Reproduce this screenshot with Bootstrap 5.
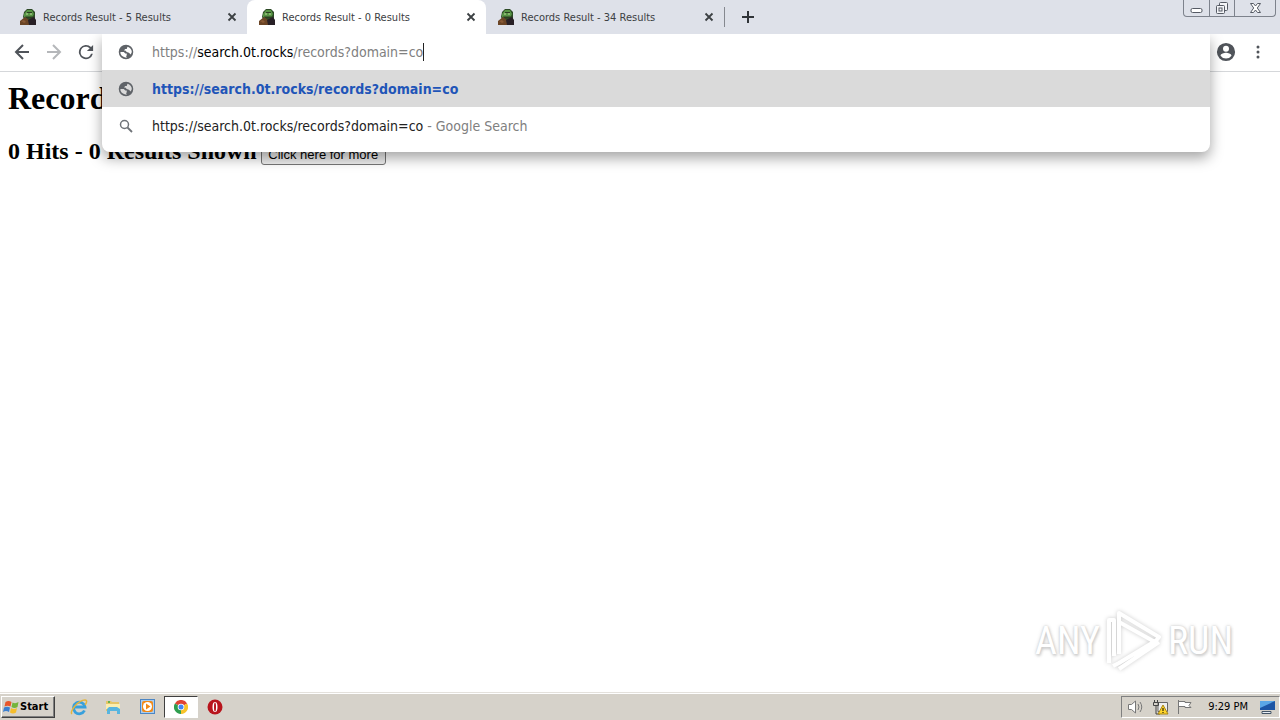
<!DOCTYPE html>
<html lang="en">
<head>
<meta charset="utf-8">
<meta name="viewport" content="width=device-width, initial-scale=1">
<title>Records Result - 0 Results</title>
<link href="https://cdn.jsdelivr.net/npm/bootstrap@5.3.0/dist/css/bootstrap.min.css" rel="stylesheet">
<style>
body { font-family: "DejaVu Sans Condensed", "Noto Sans", sans-serif; background: #fff; color: #000; font-size: 11px; line-height: 16px; }
svg { display: block; flex: none; }
button { font-family: inherit; }
.plain { border: 0; background: none; padding: 0; color: inherit; }
.tabstrip { height: 34px; background: #dee1e9; color: #3c4043; padding-left: 8px; }
.tab { width: 239px; height: 34px; padding: 0 10px 0 12px; }
.tab a { color: #3c4043; font-size: 11px; margin-left: 7px; padding-top: 1px; }
.tab.current { background: #fff; border-radius: 8px 8px 0 0; }
.tab.last { height: 20px; border-right: 1px solid #85888f; }
.newtab { width: 46px; height: 34px; }
.winbtns { height: 17px; border: 1px solid #7d828c; border-top: 0; border-radius: 0 0 4px 4px; margin-right: 4px; }
.winbtns button { width: 25px; height: 16px; }
.winbtns button + button { border-left: 1px solid #7d828c; }
.winbtns button:last-child { width: 41px; }
.toolbar { height: 38px; border-bottom: 1px solid #d5d7da; background: #fff; }
.navbtns { width: 102px; height: 36px; padding-left: 14px; gap: 16px; }
.omni { height: 37px; z-index: 5; }
.popup { top: 0; left: 0; right: 0; height: 118px; background: #fff; border-radius: 0 0 8px 8px; box-shadow: 0 6px 14px rgba(0,0,0,.36); clip-path: inset(0 -20px -30px -20px); font-size: 14px; line-height: 20px; }
.line { height: 37px; padding-left: 16px; gap: 18px; }
.line.entry { height: 36px; }
.line.hot { background: #dadada; }
.line a { color: #222; }
.line.hot a { color: #1f55b8; font-weight: 700; }
.urlbox { position: relative; }
.urlbox input { border: 0; padding: 0; width: 100%; color: transparent; background: none; outline: 0; position: absolute; inset: 0; }
.caret { width: 1px; height: 18px; background: #222; }
.grey { color: #808080; }
.user { padding: 0 13px 0 6px; gap: 14px; width: 70px; height: 36px; }
.page { font-family: "Liberation Serif", serif; padding: 8px; }
.page h1 { font-size: 32px; line-height: 37px; font-weight: 700; margin: 0 0 20px; }
.page h2 { font-size: 24px; line-height: 28px; font-weight: 700; margin: 0; }
.more { font-family: "Liberation Sans", sans-serif; font-size: 13px; line-height: 15px; height: 21px; width: 125px; padding: 0; border: 1px solid #767676; border-radius: 3px; background: #efefef; color: #000; margin-top: 7px; }
.wm { right: 47px; bottom: 20px; gap: 5px; color: #fff; font-family: "Roboto Condensed", Roboto, sans-serif; font-weight: 400; font-size: 38px; line-height: 60px; text-shadow: 0 0 2px #ccc, 1px 2px 3px #ccc, 0 0 4px #ddd; }
.wm svg { filter: drop-shadow(0 0 2px #ccc); }
.taskbar { height: 28px; background: #d6d2ca; border-top: 1px solid #e4e1dc; box-shadow: inset 0 1px #fff; padding-left: 1px; color: #000; }
.raised { width: 54px; height: 22px; border: 1px solid; border-color: #fff #404040 #404040 #fff; box-shadow: inset -1px -1px #808080; font-weight: 700; font-size: 11px; }
.quick { margin-left: 7px; }
.quick button { width: 34px; height: 22px; }
.quick button.pressed { background: #fff; border: 1px solid; border-color: #404040 #fff #fff #404040; }
.tray { height: 22px; border: 1px solid; border-color: #808080 #fff #fff #808080; padding: 0 3px 0 5px; gap: 7px; }
.clock { margin: 0 4px 0 8px; }
</style>
</head>
<body class="d-flex flex-column vh-100 overflow-hidden">
<svg width="0" height="0" class="position-absolute" aria-hidden="true">
  <symbol id="frog" viewBox="0 0 16 16"><path fill="#2d4a26" d="M3 8 4 3 7 0h5l3 3v11H6z"/><path fill="#569444" d="M4 5 7 1l5 0 2 4-2 4H7L4 8z"/><path fill="#2c3f22" d="M5 7.500h8V9H6zM7 3h5v1H7z"/><path fill="#b9d69b" d="M6 4.500h2v1H6zM10 4.500h2v1h-2z"/><path fill="#6b4526" d="m0 12 5-4 4 3 2 3v2H0z"/><path fill="#282026" d="M8 11l6-3 2 3v5H9z"/><path fill="#8a5a35" d="m1 12 3-1 2 2-2 1z"/></symbol>
  <symbol id="cross" viewBox="0 0 10 10"><path d="m1.500 1.500 7 7m0-7-7 7" stroke="#3c4043" stroke-width="1.800"/></symbol>
  <symbol id="globe" viewBox="1 1 22 22"><path fill="#5f6368" d="M12 2a10 10 0 1 0 0 20 10 10 0 0 0 0-20zm1 17.800c-3.500.2-7-1.800-8.500-5.300L4.300 12H9l2 2h2v3h-1zM18.500 15.500 16 13l-3-1-2-2H9l2-2h2l1-3.300c3.500.8 6 4 6 7.300z"/></symbol>
</svg>

<header>
  <div class="tabstrip d-flex align-items-center">
    <div class="tab d-flex align-items-center"><svg width="16" height="16"><use href="#frog"/></svg><a href="#" class="text-decoration-none flex-grow-1">Records Result - 5 Results</a><button class="plain" aria-label="Close tab"><svg width="10" height="10"><use href="#cross"/></svg></button></div>
    <div class="tab current d-flex align-items-center"><svg width="16" height="16"><use href="#frog"/></svg><a href="#" class="text-decoration-none flex-grow-1">Records Result - 0 Results</a><button class="plain" aria-label="Close tab"><svg width="10" height="10"><use href="#cross"/></svg></button></div>
    <div class="tab last d-flex align-items-center"><svg width="16" height="16"><use href="#frog"/></svg><a href="#" class="text-decoration-none flex-grow-1">Records Result - 34 Results</a><button class="plain" aria-label="Close tab"><svg width="10" height="10"><use href="#cross"/></svg></button></div>
    <button class="plain newtab d-flex align-items-center justify-content-center" aria-label="New tab"><svg width="12" height="12"><path d="M6 0v12M0 6h12" stroke="#303438" stroke-width="2"/></svg></button>
    <div class="winbtns d-flex ms-auto align-self-start">
      <button class="plain d-flex align-items-center justify-content-center" aria-label="Minimize"><svg width="13" height="10"><rect x="1" y="5.500" width="11" height="4" rx="1.500" fill="#fff" stroke="#555a64"/></svg></button>
      <button class="plain d-flex align-items-center justify-content-center" aria-label="Restore"><svg width="14" height="14" fill="#f4f5f8" stroke="#555a64"><rect x="4.500" y="1.500" width="8" height="8" rx="1"/><rect x="1.500" y="4.500" width="8" height="8" rx="1"/><rect x="4" y="7" width="3" height="3"/></svg></button>
      <button class="plain d-flex align-items-center justify-content-center" aria-label="Close"><svg width="13" height="12"><path d="M1.500 1.500h3l2 2.500 2-2.500h3L8.300 6l3.200 4.500h-3L6.500 8l-2 2.500h-3L4.700 6z" fill="#fff" stroke="#555a64"/></svg></button>
    </div>
  </div>
  <div class="toolbar d-flex align-items-start">
    <div class="navbtns d-flex align-items-center">
      <button class="plain" aria-label="Back"><svg width="16" height="16" fill="none" stroke="#50545a" stroke-width="2"><path d="M15 8H2m7-7L2 8l7 7"/></svg></button>
      <button class="plain" aria-label="Forward"><svg width="16" height="16" fill="none" stroke="#b5b7ba" stroke-width="2"><path d="M1 8h13M7 1l7 7-7 7"/></svg></button>
      <button class="plain" aria-label="Reload"><svg width="16" height="16" viewBox="3 3 18 18"><path fill="#50545a" d="M17.650 6.350A8 8 0 1 0 19.730 14h-2.080A6 6 0 1 1 12 6c1.660 0 3.140.690 4.220 1.780L13 11h7V4z"/></svg></button>
    </div>
    <div class="omni position-relative flex-grow-1">
      <div class="popup position-absolute">
        <div class="line entry d-flex align-items-center"><svg width="16" height="16"><use href="#globe"/></svg><label class="urlbox d-flex align-items-center"><span class="grey">https://</span>search.0t.rocks<span class="grey">/records?domain=co</span><span class="caret"></span><input type="text" aria-label="Address"></label></div>
        <div class="line hot d-flex align-items-center"><svg width="16" height="16"><use href="#globe"/></svg><a href="#" class="text-decoration-none">https://search.0t.rocks/records?domain=co</a></div>
        <div class="line d-flex align-items-center"><svg width="16" height="16" fill="none" stroke="#6f7378"><circle cx="6.500" cy="6.500" r="4" stroke-width="1.500"/><path d="m9.500 9.500 4.500 4.500" stroke-width="1.800"/></svg><a href="#" class="text-decoration-none">https://search.0t.rocks/records?domain=co <span class="grey">- Google Search</span></a></div>
      </div>
    </div>
    <div class="user d-flex align-items-center">
      <button class="plain" aria-label="Profile"><svg width="20" height="20" viewBox="1 1 22 22"><path fill="#50545a" d="M12 2a10 10 0 1 0 0 20 10 10 0 0 0 0-20zm0 3a3.300 3.300 0 1 1 0 6.600A3.300 3.300 0 0 1 12 5zm0 14.200a7.200 7.200 0 0 1-6-3.200c0-2 4-3.100 6-3.100s6 1.100 6 3.100a7.200 7.200 0 0 1-6 3.200z"/></svg></button>
      <button class="plain" aria-label="Menu"><svg width="16" height="16" fill="#50545a"><circle cx="8" cy="3" r="1.500"/><circle cx="8" cy="8" r="1.500"/><circle cx="8" cy="13" r="1.500"/></svg></button>
    </div>
  </div>
</header>

<main class="page flex-grow-1 position-relative">
  <h1>Records</h1>
  <div class="d-flex align-items-start gap-1"><h2>0 Hits - 0 Results Shown</h2><button class="more">Click here for more</button></div>
  <div class="wm position-absolute d-flex align-items-center"><span>ANY</span>
    <svg width="58" height="62" viewBox="0 0 58 62" fill="none" stroke="#fff" stroke-width="4" stroke-linejoin="round"><path d="M14 44V3l40 24-4 5-36-20M4 53V10h5v36M8 56l6-3 38-23M14 59l40-27"/></svg>
    <span>RUN</span></div>
</main>

<footer class="taskbar d-flex align-items-center">
  <button class="plain raised d-flex align-items-center"><svg width="18" height="16" viewBox="0 0 17 16"><path fill="#e8562a" d="M3 3q3-2 6 0L8 7.500q-3-1.500-6 0z"/><path fill="#74b43c" d="M10 3.500q3 1.500 6-.5l-1 5q-3 2-6 0z"/><path fill="#3b7fd0" d="M1.500 8.500q3-1.500 6 0l-1 4.500q-3-2-6 0z"/><path fill="#f5bd2b" d="M8.500 9q3 2 6 0l-1 4.500q-3 2-6 0z"/></svg>Start</button>
  <div class="quick d-flex">
    <button class="plain d-flex align-items-center justify-content-center" aria-label="Internet Explorer"><svg width="18" height="18"><path d="M14.500 12.500A5.800 5.800 0 1 1 15 9H4" fill="none" stroke="#38a0dc" stroke-width="2.800"/><path d="M2 16C-1 14 8 2 15 2c3 0 1 4 0 5" fill="none" stroke="#e5b53c" stroke-width="1.500"/></svg></button>
    <button class="plain d-flex align-items-center justify-content-center" aria-label="Explorer"><svg width="18" height="18"><path fill="#e6c568" d="M2 3h5l1 1h7v9H2z"/><path fill="#fbeeb0" d="M2 6h14v5H2z"/><path fill="#58b5df" d="M3 16v-5l2-2h8l3 2v5h-3v-3H6v3z"/><path fill="#6ab04c" d="M4 3h2v2H4z"/></svg></button>
    <button class="plain d-flex align-items-center justify-content-center" aria-label="Media Player"><svg width="17" height="17"><rect x="1.500" y="1.500" width="14" height="14" fill="#a9cdf0" stroke="#4c86c4"/><rect x="3" y="3" width="11" height="11" rx="2" fill="#f28a17"/><circle cx="8.500" cy="8.500" r="4.500" fill="#fff"/><path fill="#f28a17" d="M7 5.500v6L11.500 8.500z"/></svg></button>
    <button class="plain pressed d-flex align-items-center justify-content-center" aria-label="Chrome"><svg width="14" height="14" viewBox="0 0 14 14"><path fill="#e04334" d="M7 7 .9 3.500A7 7 0 0 1 13.100 3.500z"/><path fill="#f8c32a" d="M7 7l6.100-3.500A7 7 0 0 1 7 14z"/><path fill="#2f9e4f" d="M7 7v7A7 7 0 0 1 .9 3.500z"/><circle cx="7" cy="7" r="3.300" fill="#fff"/><circle cx="7" cy="7" r="2.500" fill="#4285f4"/></svg></button>
    <button class="plain d-flex align-items-center justify-content-center" aria-label="Opera"><svg width="16" height="16"><circle cx="8" cy="8" r="7.500" fill="#b8141c"/><ellipse cx="8" cy="8" rx="2.500" ry="5" fill="#fff"/><ellipse cx="8" cy="8" rx="1" ry="4.500" fill="#b8141c"/></svg></button>
  </div>
  <div class="tray d-flex align-items-center ms-auto">
    <svg width="18" height="16" fill="none" stroke="#777"><path fill="#fff" d="M1.500 5.500h3L8.500 2v12l-4-3.500h-3z"/><path d="M11 5q2 3 0 6m2-8q3.500 5 0 10"/></svg>
    <svg width="17" height="16"><path d="M6 3.500h9.500v9H6z" fill="#eee" stroke="#666"/><path d="M2.500 1v2m3-2v2M1.500 3.500h5v3h-5zM4 7v8h4" fill="none" stroke="#444"/><path d="m11 6 5 9H6z" fill="#ffd52b" stroke="#a88512"/><path d="M11 9v3m0 1v1" stroke="#000"/></svg>
    <svg width="17" height="16" fill="#fff" stroke="#777"><path d="M2.500 1v14M3 2.500h6v1h6l-2 3 2 2H9v-1H3"/></svg>
    <span class="clock">9:29 PM</span>
    <svg width="17" height="16"><path fill="#1d55a5" d="M1 2h15v9H1z"/><path fill="#5ba6e6" d="M1 2h15L1 9z"/><path fill="#e8eef5" stroke="#456" d="M3 12.500h9v2H3z"/></svg>
  </div>
</footer>
<script src="https://cdn.jsdelivr.net/npm/bootstrap@5.3.0/dist/js/bootstrap.bundle.min.js"></script>
</body>
</html>
